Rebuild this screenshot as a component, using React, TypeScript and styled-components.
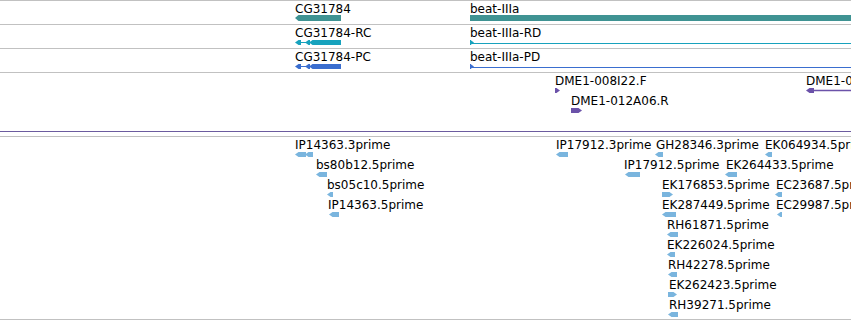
import React from "react";
import styled, { createGlobalStyle } from "styled-components";

const GlobalStyle = createGlobalStyle`
  html, body { margin: 0; padding: 0; background: #ffffff; }
  body { font-family: "DejaVu Sans", "Liberation Sans", sans-serif; }
`;

const ROW_H = 20;
const LABEL_TOP = 1;
const GLYPH_CENTER = 17.5;

type Dir = "left" | "right" | "none";
type Piece = { x: number; w: number; dir: Dir; h?: number };
type Line = { from: number; to: number; y: number; t: number };
type Glyph = { x: number; w: number; h: number; pieces: Piece[]; lines?: Line[] };
type Feature = { label: string; x: number; row: number; glyph: Glyph };
type TrackData = {
  key: string;
  height: number;
  color: string;
  features: Feature[];
  bottom?: string;
};

const Browser = styled.div`
  width: 851px;
  height: 320px;
  overflow: hidden;
  background: #ffffff;
  display: flex;
  flex-direction: column;
`;

const Track = styled.div<{ $h: number; $bottom?: string }>`
  position: relative;
  flex: 0 0 auto;
  box-sizing: border-box;
  height: ${(p) => p.$h}px;
  border-top: 1px solid #c1c1c1;
  border-bottom: ${(p) => (p.$bottom ? `1px solid ${p.$bottom}` : "none")};
  overflow: hidden;
`;

const TrackGap = styled.div<{ $h: number }>`
  flex: 0 0 auto;
  height: ${(p) => p.$h}px;
`;

const Label = styled.div.attrs<{ $x: number; $y: number }>((p) => ({
  style: { left: p.$x, top: p.$y },
}))<{ $x: number; $y: number }>`
  position: absolute;
  font-size: 12px;
  line-height: 14px;
  color: #000000;
  white-space: nowrap;
`;

const GlyphSvg = styled.svg.attrs<{ $x: number; $y: number }>((p) => ({
  style: { left: p.$x, top: p.$y },
}))<{ $x: number; $y: number }>`
  position: absolute;
  display: block;
  overflow: visible;
`;

function arrowPoints(x: number, w: number, h: number, dir: Dir, off: number) {
  const t = Math.min(Math.ceil(h / 2) + 0.5, w);
  const y0 = off;
  const y1 = off + h;
  const ym = off + h / 2;
  if (dir === "left")
    return `${x},${ym} ${x + t},${y0} ${x + w},${y0} ${x + w},${y1} ${x + t},${y1}`;
  if (dir === "right")
    return `${x},${y0} ${x + w - t},${y0} ${x + w},${ym} ${x + w - t},${y1} ${x},${y1}`;
  return `${x},${y0} ${x + w},${y0} ${x + w},${y1} ${x},${y1}`;
}

const FeatureGlyph: React.FC<{ g: Glyph; color: string; row: number }> = ({ g, color, row }) => {
  const top = Math.floor(GLYPH_CENTER + row * ROW_H - g.h / 2);
  return (
    <GlyphSvg $x={g.x} $y={top} width={g.w} height={g.h} viewBox={`0 0 ${g.w} ${g.h}`}>
      {(g.lines || []).map((l, i) => (
        <rect key={`l${i}`} x={l.from} y={l.y} width={l.to - l.from} height={l.t} fill={color} />
      ))}
      {g.pieces.map((p, i) => {
        const ph = p.h ?? g.h;
        return (
          <polygon key={i} points={arrowPoints(p.x, p.w, ph, p.dir, (g.h - ph) / 2)} fill={color} />
        );
      })}
    </GlyphSvg>
  );
};

const TEAL = "#3f9393";
const CYAN = "#17a2bd";
const BLUE = "#3a6ecf";
const PURPLE = "#6b52a9";
const EST = "#7ab5de";

const simple = (x: number, w: number, dir: Dir, h = 5): Glyph => ({
  x,
  w,
  h,
  pieces: [{ x: 0, w, dir }],
});

const transcript = (x: number): Glyph => ({
  x,
  w: 46,
  h: 5,
  pieces: [
    { x: 0, w: 6, dir: "left" },
    { x: 10, w: 5, dir: "left" },
    { x: 14, w: 32, dir: "left" },
  ],
  lines: [{ from: 4, to: 11, y: 2, t: 1 }],
});

const longTranscript = (x: number): Glyph => ({
  x,
  w: 400,
  h: 5,
  pieces: [{ x: 0, w: 4, dir: "right" }],
  lines: [
    { from: 0, to: 400, y: 3, t: 1 },
    { from: 0, to: 1, y: 0, t: 5 },
  ],
});

const tracks: TrackData[] = [
  {
    key: "genes",
    height: 24,
    color: TEAL,
    features: [
      { label: "CG31784", x: 295, row: 0, glyph: simple(295, 46, "left", 6) },
      { label: "beat-IIIa", x: 470, row: 0, glyph: simple(470, 400, "none", 6) },
    ],
  },
  {
    key: "rna",
    height: 24,
    color: CYAN,
    features: [
      { label: "CG31784-RC", x: 295, row: 0, glyph: transcript(295) },
      { label: "beat-IIIa-RD", x: 470, row: 0, glyph: longTranscript(470) },
    ],
  },
  {
    key: "protein",
    height: 24,
    color: BLUE,
    features: [
      { label: "CG31784-PC", x: 295, row: 0, glyph: transcript(295) },
      { label: "beat-IIIa-PD", x: 470, row: 0, glyph: longTranscript(470) },
    ],
  },
  {
    key: "bac",
    height: 60,
    color: PURPLE,
    bottom: "#6c5c9f",
    features: [
      { label: "DME1-008I22.F", x: 555, row: 0, glyph: simple(555, 5, "right") },
      { label: "DME1-012A06.R", x: 571, row: 1, glyph: simple(571, 11, "right") },
      {
        label: "DME1-016C10.R",
        x: 806,
        row: 0,
        glyph: {
          x: 806,
          w: 60,
          h: 5,
          pieces: [{ x: 0, w: 8, dir: "left" }],
          lines: [{ from: 6, to: 60, y: 1.75, t: 1.5 }],
        },
      },
    ],
  },
];

const estTrack: TrackData = {
  key: "est",
  height: 184,
  color: EST,
  bottom: "#c1c1c1",
  features: [
    {
      label: "IP14363.3prime",
      x: 295,
      row: 0,
      glyph: {
        x: 295,
        w: 18,
        h: 5,
        pieces: [
          { x: 0, w: 11, dir: "left" },
          { x: 10, w: 8, dir: "left" },
        ],
      },
    },
    { label: "IP17912.3prime", x: 556, row: 0, glyph: simple(556, 12, "left") },
    { label: "GH28346.3prime", x: 656, row: 0, glyph: simple(655, 8, "left") },
    { label: "EK064934.5prime", x: 765, row: 0, glyph: simple(765, 7, "left") },
    { label: "bs80b12.5prime", x: 316, row: 1, glyph: simple(316, 11, "left") },
    { label: "IP17912.5prime", x: 624, row: 1, glyph: simple(625, 15, "left") },
    { label: "EK264433.5prime", x: 726, row: 1, glyph: simple(725, 12, "left") },
    { label: "bs05c10.5prime", x: 327, row: 2, glyph: simple(327, 6, "left") },
    { label: "EK176853.5prime", x: 662, row: 2, glyph: simple(662, 11, "right") },
    { label: "EC23687.5prime", x: 776, row: 2, glyph: simple(775, 7, "left") },
    { label: "IP14363.5prime", x: 328, row: 3, glyph: simple(329, 10, "left") },
    { label: "EK287449.5prime", x: 662, row: 3, glyph: simple(662, 14, "left") },
    { label: "EC29987.5prime", x: 776, row: 3, glyph: simple(777, 5, "left") },
    { label: "RH61871.5prime", x: 667, row: 4, glyph: simple(667, 11, "left") },
    { label: "EK226024.5prime", x: 667, row: 5, glyph: simple(667, 8, "left") },
    { label: "RH42278.5prime", x: 668, row: 6, glyph: simple(668, 9, "left") },
    { label: "EK262423.5prime", x: 669, row: 7, glyph: simple(668, 9, "right") },
    { label: "RH39271.5prime", x: 669, row: 8, glyph: simple(668, 10, "left") },
  ],
};

const TrackView: React.FC<{ t: TrackData }> = ({ t }) => (
  <Track $h={t.height} $bottom={t.bottom}>
    {t.features.map((f) => (
      <React.Fragment key={f.label}>
        <Label $x={f.x} $y={LABEL_TOP + f.row * ROW_H}>
          {f.label}
        </Label>
        <FeatureGlyph g={f.glyph} color={t.color} row={f.row} />
      </React.Fragment>
    ))}
  </Track>
);

export default function App() {
  return (
    <>
      <GlobalStyle />
      <Browser>
        {tracks.map((t) => (
          <TrackView key={t.key} t={t} />
        ))}
        <TrackGap $h={4} />
        <TrackView t={estTrack} />
      </Browser>
    </>
  );
}
